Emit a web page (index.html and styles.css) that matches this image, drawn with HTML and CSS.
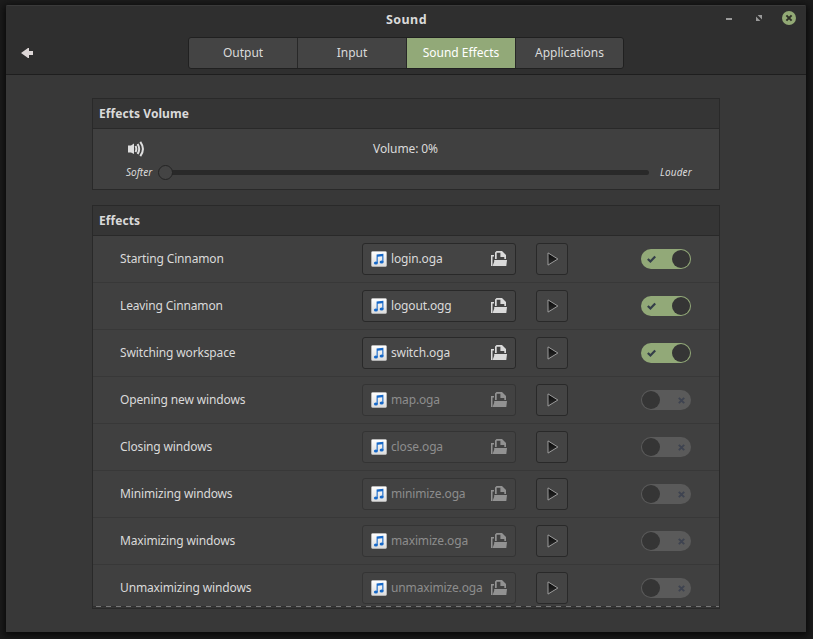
FILE: index.html
```html
<!DOCTYPE html>
<html lang="en">
<head>
<meta charset="utf-8">
<title>Sound</title>
<link rel="stylesheet" href="styles.css">
</head>
<body>
<svg class="defs" width="0" height="0" aria-hidden="true">
  <defs>
    <linearGradient id="paper" x1="0" y1="0" x2="0" y2="1"><stop offset="0" stop-color="#fff"/><stop offset="1" stop-color="#dcdcdc"/></linearGradient>
    <linearGradient id="dark" x1="0" y1="0" x2="0" y2="1"><stop offset="0" stop-color="#050505"/><stop offset="1" stop-color="#303030"/></linearGradient>
    <symbol id="note" viewBox="0 0 16 16">
      <rect x=".5" y=".5" width="15" height="15" rx="1" fill="url(#paper)" stroke="#c9c9c9" stroke-width=".6"/>
      <path d="M5.6 3.6 12.4 2.8V11.2H11.3V5.2L6.7 5.8V12H5.6Z" fill="#1668c8"/>
      <ellipse cx="4.9" cy="12" rx="2" ry="1.5" fill="#1668c8"/><ellipse cx="10.6" cy="11" rx="2" ry="1.5" fill="#1668c8"/>
    </symbol>
    <symbol id="open" viewBox="0 0 16 16">
      <path d="M0 4h3v1.5H1.5V15H0Z"/>
      <path d="M4 8V1.5L5.5 0H11l4 4v4h-1.7V6H9.4V1.7H5.7V8Z"/>
      <path d="M3.2 10.5V9H16L15.3 15H1.6Z"/>
    </symbol>
    <symbol id="play" viewBox="0 0 12 14">
      <path d="M1 .9 10.9 7 1 13.1Z" fill="url(#dark)" stroke="#9a9a9a"/>
    </symbol>
    <symbol id="check" viewBox="0 0 9 8"><path d="M.8 4 3.4 6.4 8.2 1.4" fill="none" stroke="#343e49" stroke-width="2.2"/></symbol>
    <symbol id="cross" viewBox="0 0 7 7"><path d="M.8.8 6.2 6.2M6.2.8.8 6.2" fill="none" stroke="#3e4350" stroke-width="1.9"/></symbol>
  </defs>
</svg>
<div class="window">
  <header class="header">
    <div class="titlebar">
      <h1 class="title">Sound</h1>
      <div class="controls">
        <svg width="6" height="10" viewBox="0 0 6 10"><path d="M0 4h6v2H0Z" fill="#9b9b9b"/></svg>
        <svg class="resize" width="6" height="6" viewBox="0 0 6 6"><path d="M1.6 0H6V4.4ZM0 1.6V6H4.4Z" fill="#999"/></svg>
        <svg class="close" width="14" height="14" viewBox="0 0 14 14"><circle cx="7" cy="7" r="7" fill="#92a975"/><path d="M4.4 4.4 9.6 9.6M9.6 4.4 4.4 9.6" stroke="#2e3127" stroke-width="2"/></svg>
      </div>
    </div>
    <div class="toolbar">
      <svg class="back" width="12" height="10" viewBox="0 0 12 10"><path d="M0 5 7 0H8V3H12V7H8V10H7Z" fill="#ddd7d7"/></svg>
      <nav class="tabs">
        <span class="tab">Output</span><span class="tab">Input</span><span class="tab active">Sound Effects</span><span class="tab">Applications</span>
      </nav>
    </div>
  </header>
  <main class="content">
    <section class="panel">
      <h2 class="heading">Effects Volume</h2>
      <div class="volume">
        <div class="volume-top">
          <svg class="speaker" width="17" height="16" viewBox="0 0 17 16"><path d="M0 4.5H3L6 2.5V13L3 11.5H0Z" fill="#dedede"/><path d="M7.5 5Q9.2 8 7.5 11M9.6 3Q12.8 8 9.6 13M12.3.8Q17.6 8 12.3 15.2" fill="none" stroke="#dedede" stroke-width="2"/></svg>
          <span class="level">Volume: 0%</span>
        </div>
        <div class="slider">
          <em class="softer">Softer</em>
          <div class="track"><i class="knob"></i></div>
          <em class="louder">Louder</em>
        </div>
      </div>
    </section>
    <section class="panel">
      <h2 class="heading">Effects</h2>
      <div class="rows">
        <div class="row"><span class="name">Starting Cinnamon</span><div class="file"><svg class="note"><use href="#note"/></svg><span>login.oga</span><svg class="open"><use href="#open"/></svg></div><div class="play"><svg><use href="#play"/></svg></div><div class="switch on"><svg class="check"><use href="#check"/></svg><i></i></div></div>
        <div class="row"><span class="name">Leaving Cinnamon</span><div class="file"><svg class="note"><use href="#note"/></svg><span>logout.ogg</span><svg class="open"><use href="#open"/></svg></div><div class="play"><svg><use href="#play"/></svg></div><div class="switch on"><svg class="check"><use href="#check"/></svg><i></i></div></div>
        <div class="row"><span class="name">Switching workspace</span><div class="file"><svg class="note"><use href="#note"/></svg><span>switch.oga</span><svg class="open"><use href="#open"/></svg></div><div class="play"><svg><use href="#play"/></svg></div><div class="switch on"><svg class="check"><use href="#check"/></svg><i></i></div></div>
        <div class="row"><span class="name">Opening new windows</span><div class="file disabled"><svg class="note"><use href="#note"/></svg><span>map.oga</span><svg class="open"><use href="#open"/></svg></div><div class="play"><svg><use href="#play"/></svg></div><div class="switch"><i></i><svg class="cross"><use href="#cross"/></svg></div></div>
        <div class="row"><span class="name">Closing windows</span><div class="file disabled"><svg class="note"><use href="#note"/></svg><span>close.oga</span><svg class="open"><use href="#open"/></svg></div><div class="play"><svg><use href="#play"/></svg></div><div class="switch"><i></i><svg class="cross"><use href="#cross"/></svg></div></div>
        <div class="row"><span class="name">Minimizing windows</span><div class="file disabled"><svg class="note"><use href="#note"/></svg><span>minimize.oga</span><svg class="open"><use href="#open"/></svg></div><div class="play"><svg><use href="#play"/></svg></div><div class="switch"><i></i><svg class="cross"><use href="#cross"/></svg></div></div>
        <div class="row"><span class="name">Maximizing windows</span><div class="file disabled"><svg class="note"><use href="#note"/></svg><span>maximize.oga</span><svg class="open"><use href="#open"/></svg></div><div class="play"><svg><use href="#play"/></svg></div><div class="switch"><i></i><svg class="cross"><use href="#cross"/></svg></div></div>
        <div class="row"><span class="name">Unmaximizing windows</span><div class="file disabled"><svg class="note"><use href="#note"/></svg><span>unmaximize.oga</span><svg class="open"><use href="#open"/></svg></div><div class="play"><svg><use href="#play"/></svg></div><div class="switch"><i></i><svg class="cross"><use href="#cross"/></svg></div></div>
      </div>
      <div class="overshoot"></div>
    </section>
  </main>
</div>
</body>
</html>
```
FILE: styles.css
```css
* { box-sizing: border-box; }
body {
  margin: 0;
  height: 639px;
  padding: 5px 7px 7px 6px;
  overflow: hidden;
  background: #1c1c1c;
  color: #dadada;
  font: 12px/16px "Noto Sans", sans-serif;
}
svg { display: block; flex: none; }
.defs { position: absolute; }
h1, h2 { margin: 0; font-size: 12px; line-height: 16px; font-weight: 700; }
.window {
  width: 800px;
  height: 627px;
  background: #383838;
  border-radius: 2px 2px 0 0;
  box-shadow: 0 2px 7px 2px #0a0a0a;
  overflow: hidden;
}
.header {
  height: 70px;
  background: #2f2f2f;
  border-top: 1px solid #3a3a3a;
  border-bottom: 1px solid #1e1e1e;
}
.titlebar {
  display: grid;
  grid-template-columns: 1fr auto 1fr;
  align-items: center;
  height: 31px;
  padding-bottom: 5px;
}
.title { grid-column: 2; font-size: 12.5px; letter-spacing: .45px; padding: 1px 0 0 1px; }
.controls {
  display: flex;
  align-items: center;
  justify-content: flex-end;
  padding-right: 10px;
  gap: 24px;
}
.close { margin: -2px 0 0 -4px; }
.resize { margin-top: -2px; }
.toolbar { display: flex; align-items: center; height: 32px; padding-left: 15px; }
.tabs {
  display: flex;
  width: 436px;
  height: 32px;
  margin-left: 155px;
  border: 1px solid #202020;
  border-radius: 3px;
  background: #444;
  overflow: hidden;
}
.tab { width: 109px; flex: none; text-align: center; line-height: 29px; border-right: 1px solid #282828; }
.tab:last-child { width: 107px; border: 0; }
.tab.active { background: #92a978; color: #fff; }
.content { display: flex; flex-direction: column; gap: 15px; padding: 23px 86px; }
.panel { border: 1px solid #292929; background: #404040; }
.heading { height: 30px; padding: 7px 6px; background: #353535; border-bottom: 1px solid #292929; letter-spacing: .07px; }
.volume { height: 60px; padding: 12px 26px 0 33px; }
.volume-top { display: flex; height: 16px; }
.speaker { margin-left: 2px; }
.level { flex: 1; text-align: center; padding-right: 27px; letter-spacing: -.1px; }
.slider { display: flex; align-items: center; height: 16px; margin-top: 7px; font-size: 10px; }
.softer { width: 33px; }
.louder { width: 33px; margin-left: 11px; letter-spacing: .15px; }
.track { display: flex; align-items: center; flex: none; width: 489px; height: 5px; border-radius: 3px; background: #292929; margin-left: 1px; }
.knob { flex: none; width: 15px; height: 15px; margin-left: -2px; border: 1px solid #242424; border-radius: 50%; background: #444; }
.rows { height: 370px; overflow: hidden; }
.row { display: flex; align-items: center; height: 47px; padding-left: 27px; border-bottom: 1px solid #383838; }
.name { width: 242px; letter-spacing: -.14px; }
.file {
  display: flex;
  align-items: center;
  width: 154px;
  height: 32px;
  padding: 0 8px;
  border: 1px solid #292929;
  border-radius: 3px;
  background: #444;
}
.file span { flex: 1; margin-left: 4px; white-space: nowrap; letter-spacing: -.14px; }
.note { width: 16px; height: 16px; }
.open { width: 16px; height: 16px; fill: #dadada; }
.disabled { color: #8d8d8d; border-color: #343434; background: #424242; }
.disabled .open { fill: #929292; }
.play {
  display: flex;
  align-items: center;
  justify-content: center;
  width: 32px;
  height: 32px;
  margin-left: 20px;
  padding: 0 0 1px 1px;
  border: 1px solid #292929;
  border-radius: 3px;
  background: #444;
}
.play svg { width: 12px; height: 14px; }
.switch {
  display: flex;
  align-items: center;
  justify-content: space-between;
  width: 50px;
  height: 20px;
  margin-left: 73px;
  padding: 0 6px 0 1px;
  border-radius: 10px;
  background: #5a5a5a;
}
.switch i { width: 18px; height: 18px; border-radius: 50%; background: #353535; }
.switch.on { padding: 0 1px 0 6px; background: #92a978; }
.check { width: 9px; height: 8px; }
.cross { width: 7px; height: 7px; }
.overshoot { height: 2px; border-bottom: 1px solid #353535; background: repeating-linear-gradient(90deg, #2f2f2f 0 3px, #777 3px 8px, #2f2f2f 8px 10px); }
```
